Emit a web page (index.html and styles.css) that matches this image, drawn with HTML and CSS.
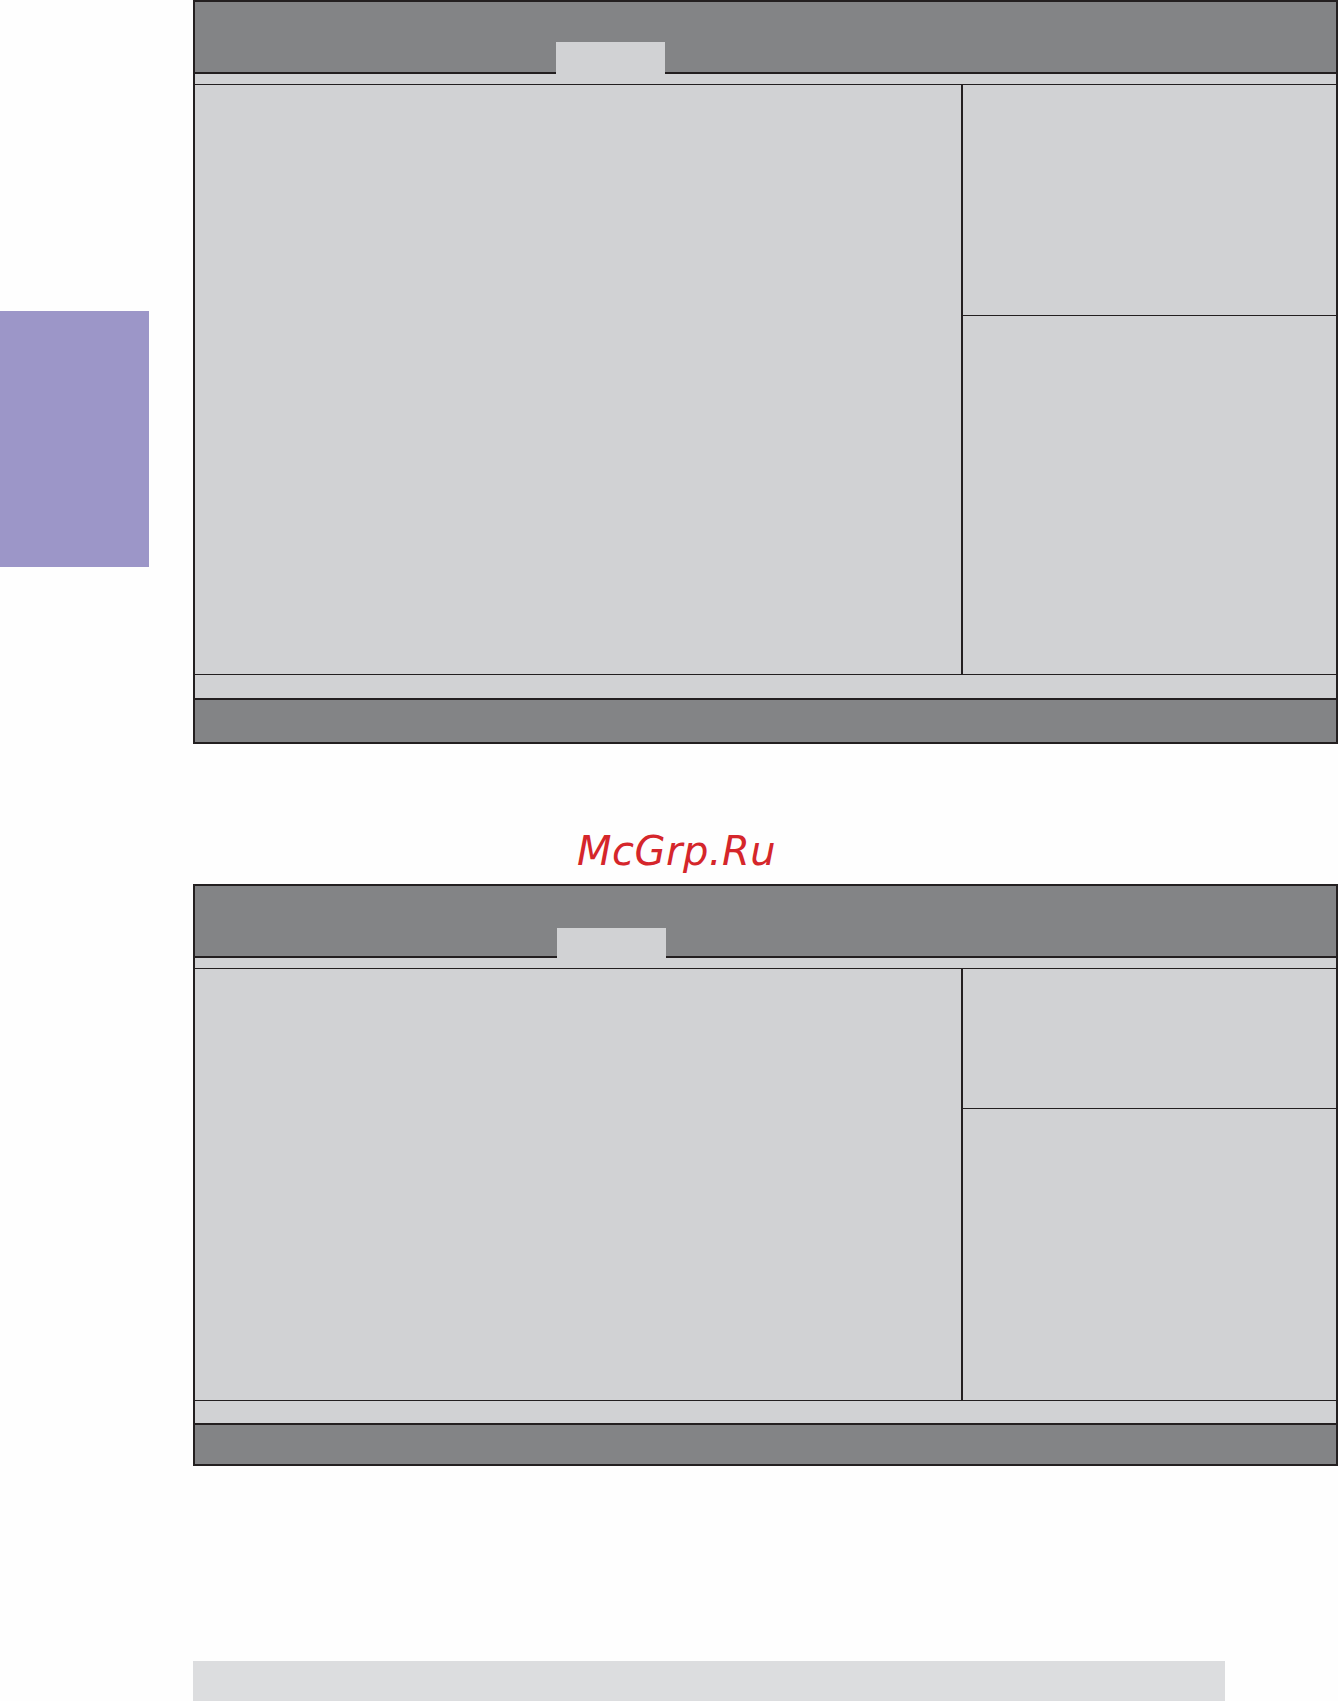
FILE: index.html
```html
<!DOCTYPE html>
<html lang="en">
<head>
<meta charset="utf-8">
<title>BIOS screens</title>
<link rel="stylesheet" href="styles.css">
</head>
<body>
<div class="page">
  <aside class="side">
    <div class="side-tab"></div>
  </aside>
  <main class="content">
    <section class="bios bios-one">
      <div class="bios-header"><div class="bios-tab"></div></div>
      <div class="bios-strip"></div>
      <div class="bios-main">
        <div class="bios-left"></div>
        <div class="bios-right">
          <div class="bios-help"></div>
          <div class="bios-keys"></div>
        </div>
      </div>
      <div class="bios-status"></div>
      <div class="bios-footer"></div>
    </section>
    <div class="caption"><span class="watermark">McGrp.Ru</span></div>
    <section class="bios bios-two">
      <div class="bios-header"><div class="bios-tab"></div></div>
      <div class="bios-strip"></div>
      <div class="bios-main">
        <div class="bios-left"></div>
        <div class="bios-right">
          <div class="bios-help"></div>
          <div class="bios-keys"></div>
        </div>
      </div>
      <div class="bios-status"></div>
      <div class="bios-footer"></div>
    </section>
    <div class="bottom-bar"></div>
  </main>
</div>
</body>
</html>
```
FILE: styles.css
```css
html, body {
  margin: 0;
  padding: 0;
  background: #fefefe;
}
body {
  font-family: "DejaVu Sans", "Liberation Sans", sans-serif;
  width: 1338px;
  height: 1701px;
  overflow: hidden;
}
.page {
  display: flex;
  width: 1338px;
  height: 1701px;
}
.side {
  width: 193px;
  flex: none;
}
.side-tab {
  width: 149px;
  height: 256px;
  margin-top: 311px;
  background: #9c96c8;
}
.content {
  width: 1145px;
  flex: none;
  display: flex;
  flex-direction: column;
}
.bios {
  box-sizing: border-box;
  border: 2px solid #231f20;
  display: flex;
  flex-direction: column;
  background: #d1d2d4;
}
.bios-one { height: 744px; }
.bios-two { height: 582px; }
.bios-header {
  height: 70px;
  flex: none;
  background: #838486;
  border-bottom: 2px solid #231f20;
  display: flex;
  align-items: flex-end;
  padding-left: 361px;
}
.bios-tab {
  width: 109px;
  height: 32px;
  margin-bottom: -2px;
  background: #d1d2d4;
}
.bios-two .bios-tab {
  width: 109px;
  height: 30px;
  margin-left: 1px;
}
.bios-strip {
  height: 10px;
  flex: none;
  border-bottom: 1px solid #231f20;
}
.bios-main {
  flex: none;
  display: flex;
  border-bottom: 1px solid #231f20;
}
.bios-one .bios-main { height: 589px; }
.bios-two .bios-main { height: 431px; }
.bios-left {
  flex: 1;
}
.bios-right {
  width: 373px;
  flex: none;
  border-left: 2px solid #231f20;
  display: flex;
  flex-direction: column;
}
.bios-help {
  flex: none;
  border-bottom: 1px solid #231f20;
}
.bios-one .bios-help { height: 230px; }
.bios-two .bios-help { height: 139px; }
.bios-keys { flex: 1; }
.bios-status {
  flex: none;
  border-bottom: 2px solid #231f20;
}
.bios-one .bios-status { height: 23px; }
.bios-two .bios-status { height: 22px; }
.bios-footer {
  flex: 1;
  background: #838486;
}
.caption {
  height: 140px;
  box-sizing: border-box;
  padding-top: 83px;
  padding-left: 384px;
}
.watermark {
  display: block;
  font-family: "DejaVu Sans", sans-serif;
  font-style: oblique;
  font-size: 40px;
  line-height: 48px;
  color: #d5262b;
  letter-spacing: 0.5px;
}
.bottom-bar {
  margin-top: 195px;
  width: 1032px;
  height: 40px;
  background: #dcdddf;
}
```
